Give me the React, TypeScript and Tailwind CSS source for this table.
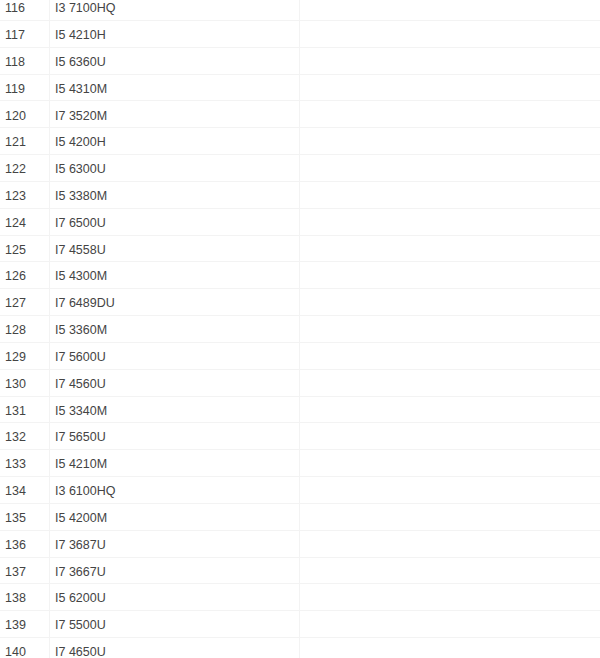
const rows: [number, string][] = [
  [116, "I3 7100HQ"],
  [117, "I5 4210H"],
  [118, "I5 6360U"],
  [119, "I5 4310M"],
  [120, "I7 3520M"],
  [121, "I5 4200H"],
  [122, "I5 6300U"],
  [123, "I5 3380M"],
  [124, "I7 6500U"],
  [125, "I7 4558U"],
  [126, "I5 4300M"],
  [127, "I7 6489DU"],
  [128, "I5 3360M"],
  [129, "I7 5600U"],
  [130, "I7 4560U"],
  [131, "I5 3340M"],
  [132, "I7 5650U"],
  [133, "I5 4210M"],
  [134, "I3 6100HQ"],
  [135, "I5 4200M"],
  [136, "I7 3687U"],
  [137, "I7 3667U"],
  [138, "I5 6200U"],
  [139, "I7 5500U"],
  [140, "I7 4650U"],
]

export default function App() {
  return (
    <div className="w-[600px] h-[658px] overflow-hidden bg-white">
      <div className="-mt-[5.83px] font-['Liberation_Sans',Arial,sans-serif] text-[12.5px] text-[#444]">
        {rows.map(([num, cpu]) => (
          <div key={num} className="flex h-[26.83px] border-b border-[#f3f3f3]">
            <div className="w-[50px] flex items-center pt-[3px] pl-[5px] border-r border-[#f3f3f3]">{num}</div>
            <div className="w-[250px] flex items-center pt-[3px] pl-[5px] border-r border-[#f3f3f3]">{cpu}</div>
            <div className="flex-1" />
          </div>
        ))}
      </div>
    </div>
  )
}
